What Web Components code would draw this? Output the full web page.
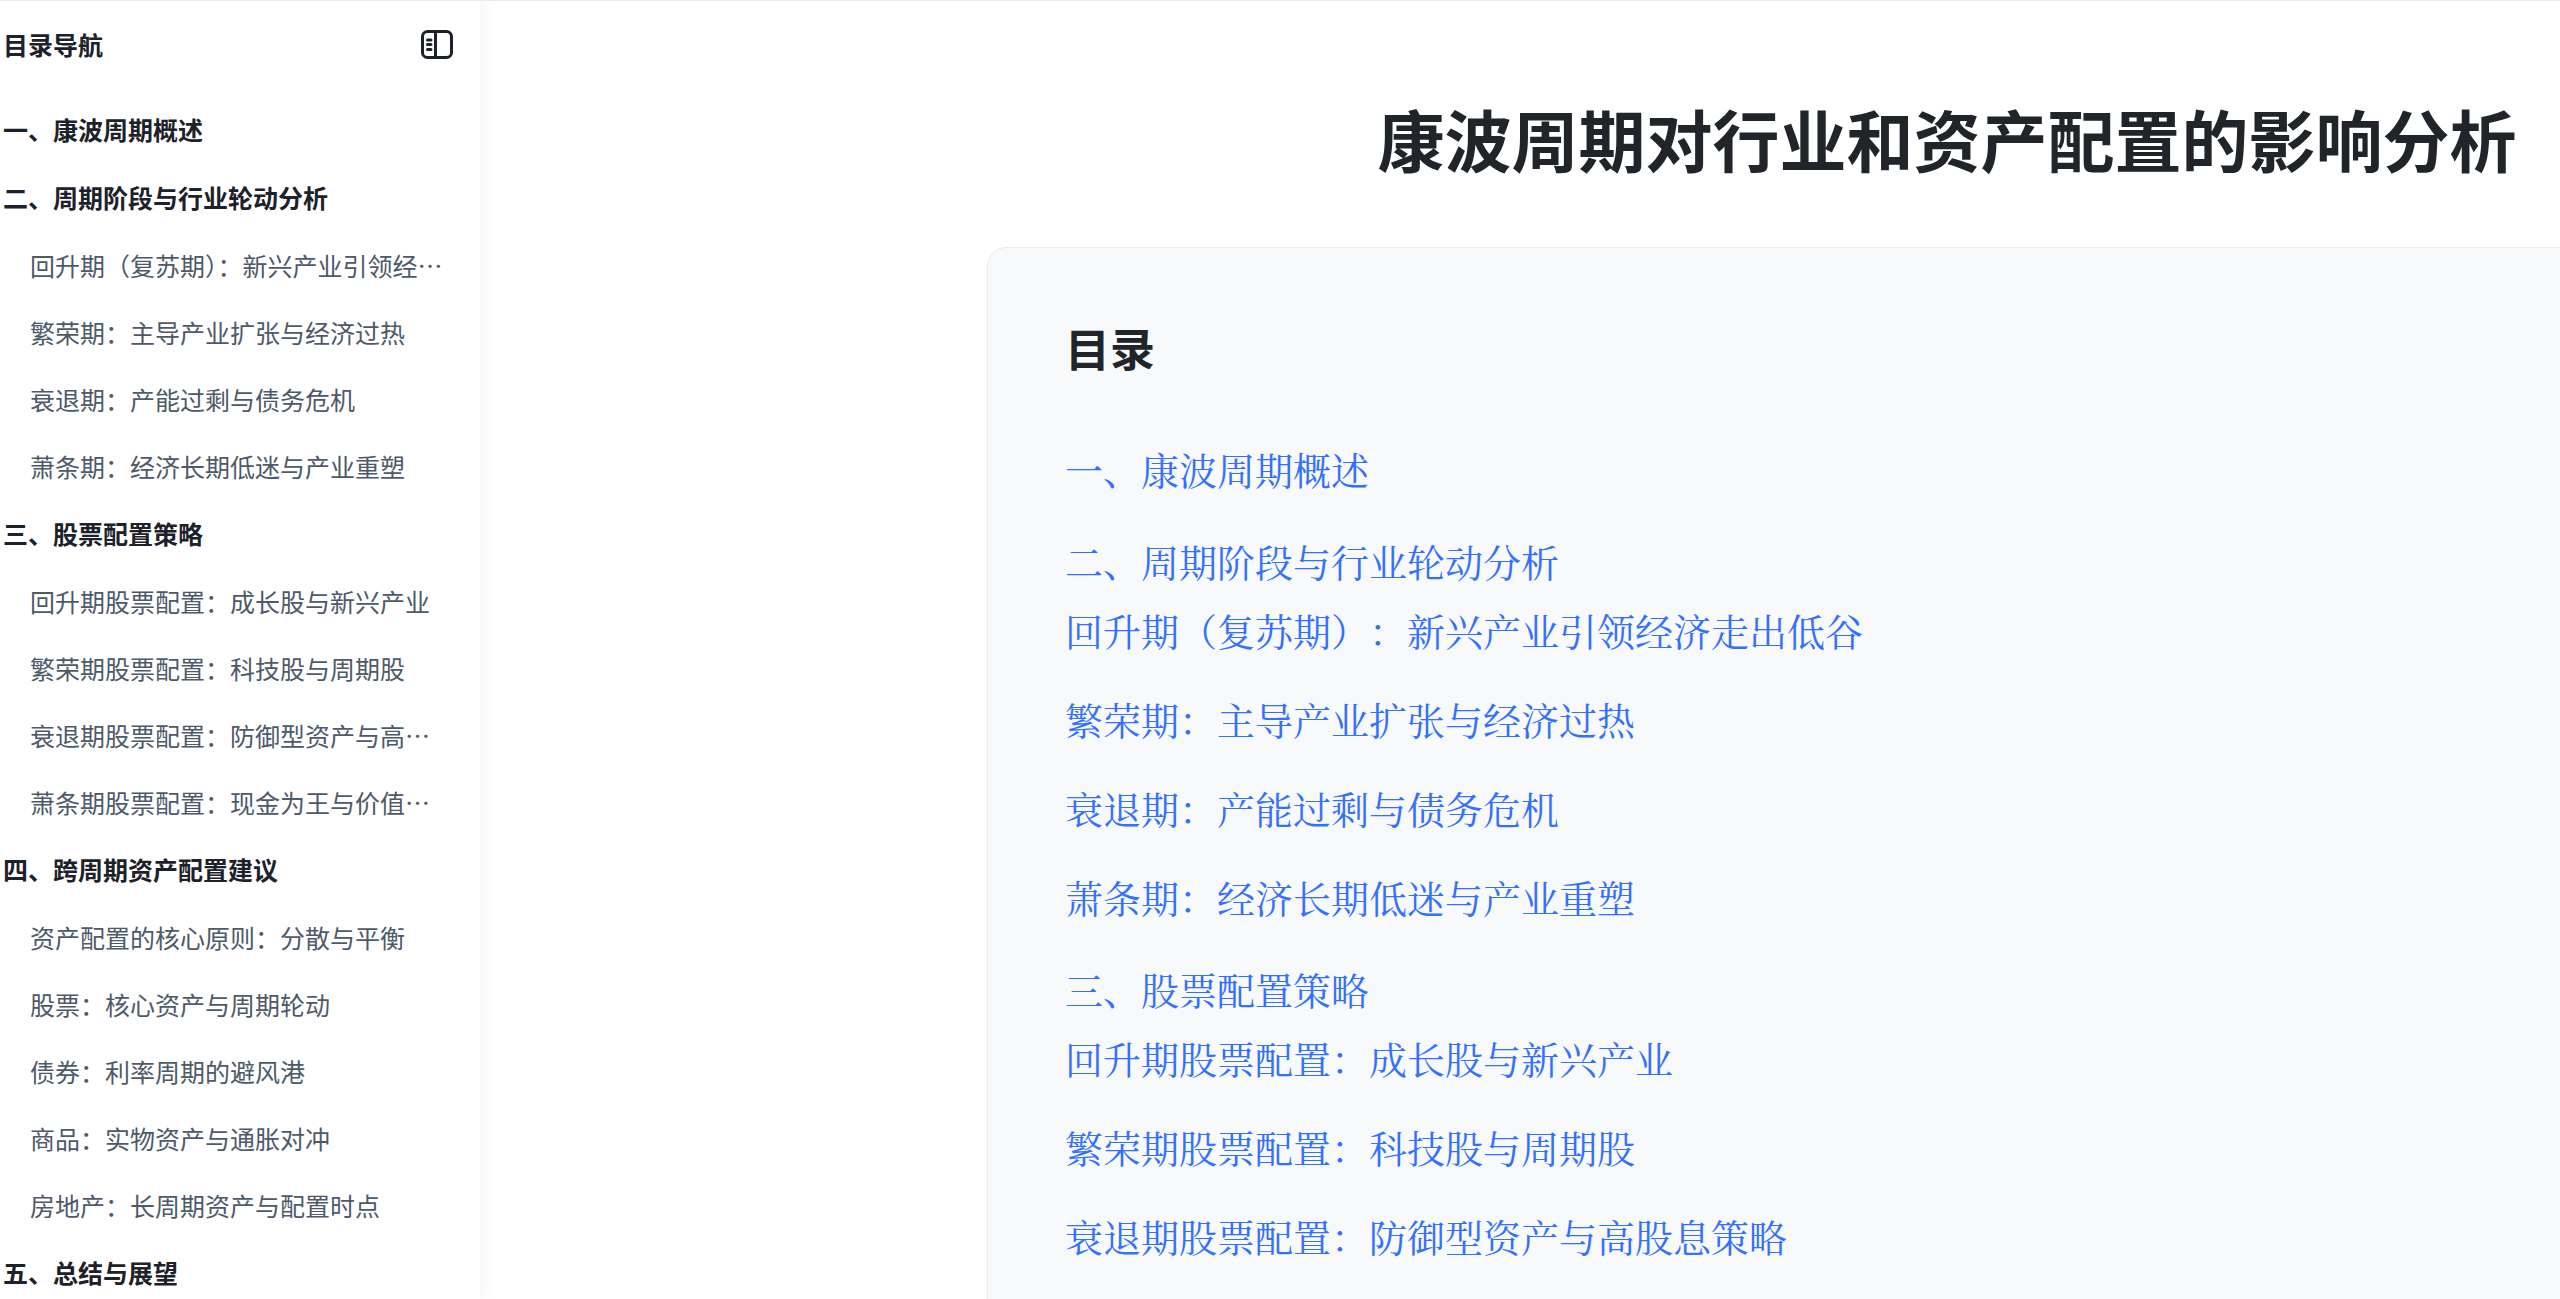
<!DOCTYPE html>
<html lang="zh-CN">
<head>
  <meta charset="UTF-8">
  <meta name="viewport" content="width=device-width, initial-scale=1.0">
  <title>康波周期对行业和资产配置的影响分析</title>
  <style>
    body {
      margin: 0;
      background: #fff;
      color: #1d2129;
      font-family: "Noto Sans CJK SC", sans-serif;
      overflow: hidden;
    }
  </style>
</head>
<body>
  <report-page>
    <side-nav slot="nav" heading="目录导航"></side-nav>
    <report-article heading="康波周期对行业和资产配置的影响分析">
      <toc-card heading="目录"></toc-card>
    </report-article>
  </report-page>

  <script>
    const sections = [
      { title: '一、康波周期概述', items: [] },
      {
        title: '二、周期阶段与行业轮动分析',
        items: [
          '回升期（复苏期）：新兴产业引领经济走出低谷',
          '繁荣期：主导产业扩张与经济过热',
          '衰退期：产能过剩与债务危机',
          '萧条期：经济长期低迷与产业重塑'
        ]
      },
      {
        title: '三、股票配置策略',
        items: [
          '回升期股票配置：成长股与新兴产业',
          '繁荣期股票配置：科技股与周期股',
          '衰退期股票配置：防御型资产与高股息策略',
          '萧条期股票配置：现金为王与价值投资'
        ]
      },
      {
        title: '四、跨周期资产配置建议',
        items: [
          '资产配置的核心原则：分散与平衡',
          '股票：核心资产与周期轮动',
          '债券：利率周期的避风港',
          '商品：实物资产与通胀对冲',
          '房地产：长周期资产与配置时点'
        ]
      },
      { title: '五、总结与展望', items: [] }
    ]

    // nested list shared by the side navigation and the card
    const listMarkup = (data) => data.map((section, i) => `
      <li class="section">
        <a class="title" href="#s${i + 1}">${section.title}</a>
        ${section.items.length ? `<ul>${section.items.map((item, j) => `
          <li><a href="#s${i + 1}-${j + 1}">${item}</a></li>`).join('')}
        </ul>` : ''}
      </li>`).join('')

    class ReportPage extends HTMLElement {
      constructor() {
        super()
        this.shadow = this.attachShadow({ mode: 'open' })
      }

      connectedCallback() {
        this.shadow.innerHTML =
        /*html*/`
        <style>
          :host {
            display: flex;
            height: 100vh;
            box-sizing: border-box;
            border-top: 1px solid #e8e9eb;
            overflow: hidden;
          }

          main {
            flex: 1;
            min-width: 0;
            padding: 0 0 0 507px;
          }
        </style>

        <slot name="nav"></slot>
        <main><slot></slot></main>
        `
      }
    }

    class SideNav extends HTMLElement {
      constructor() {
        super()
        this.shadow = this.attachShadow({ mode: 'open' })
      }

      connectedCallback() {
        this.shadow.innerHTML =
        /*html*/`
        <style>
          :host {
            display: block;
            flex: none;
            width: 480px;
            box-sizing: border-box;
            padding: 9px 27px 0 3px;
            background: #fff;
            box-shadow: 2px 0 16px rgba(31, 35, 41, 0.06);
            font-size: 25px;
          }

          header {
            display: flex;
            align-items: center;
            justify-content: space-between;
            height: 68px;
            margin-bottom: 18px;
          }

          h2 {
            margin: 0;
            font-size: 25px;
            font-weight: 700;
          }

          button {
            display: flex;
            padding: 0;
            border: none;
            background: transparent;
            color: inherit;
          }

          ul {
            list-style: none;
            margin: 0;
            padding: 0;
          }

          li li {
            padding-left: 27px;
          }

          a {
            display: block;
            height: 67px;
            line-height: 67px;
            color: #4e5969;
            text-decoration: none;
            white-space: nowrap;
            overflow: hidden;
            text-overflow: ellipsis;
          }

          .title {
            height: 68px;
            color: #1d2129;
            font-weight: 700;
          }
        </style>

        <header>
          <h2>${this.getAttribute('heading')}</h2>
          <button type="button" aria-label="收起目录">
            <svg width="32" height="29" viewBox="0 0 32 29" fill="none" stroke="currentColor" stroke-width="3">
              <rect x="1.5" y="1.5" width="29" height="26" rx="5"/>
              <path d="M14.5 1.5v26"/>
              <path d="M6.5 10h3.5M6.5 14.5h3.5M6.5 19.5h3.5" stroke-linecap="round"/>
            </svg>
          </button>
        </header>
        <nav><ul>${listMarkup(sections)}</ul></nav>
        `
      }
    }

    class ReportArticle extends HTMLElement {
      constructor() {
        super()
        this.shadow = this.attachShadow({ mode: 'open' })
      }

      connectedCallback() {
        this.shadow.innerHTML =
        /*html*/`
        <style>
          :host {
            display: block;
            width: 75vw;
            padding-top: 81px;
          }

          h1 {
            margin: 0 0 53px;
            color: #212529;
            font-size: 67px;
            font-weight: 700;
            line-height: 112px;
            text-align: center;
          }
        </style>

        <article>
          <h1>${this.getAttribute('heading')}</h1>
          <slot></slot>
        </article>
        `
      }
    }

    class TocCard extends HTMLElement {
      constructor() {
        super()
        this.shadow = this.attachShadow({ mode: 'open' })
      }

      connectedCallback() {
        this.shadow.innerHTML =
        /*html*/`
        <style>
          :host {
            display: block;
            box-sizing: border-box;
            padding: 64px 77px;
            border: 1px solid #e9ecef;
            border-radius: 19px;
            background: #f8f9fb;
          }

          h2 {
            margin: 0 0 50px;
            color: #212529;
            font-size: 45px;
            font-weight: 700;
            line-height: 72px;
          }

          ul {
            display: flex;
            flex-direction: column;
            gap: 20px;
            list-style: none;
            margin: 0;
            padding: 0;
          }

          .sections {
            gap: 23px;
          }

          a {
            display: block;
            color: #3370ff;
            font-family: "Noto Serif CJK SC", "Noto Serif SC", "Noto Sans CJK SC", serif;
            font-size: 38px;
            font-weight: 400;
            line-height: 69px;
            text-decoration: none;
            text-spacing-trim: space-all;
            white-space: nowrap;
          }
        </style>

        <h2>${this.getAttribute('heading')}</h2>
        <ul class="sections">${listMarkup(sections)}</ul>
        `
      }
    }

    customElements.define('report-page', ReportPage)
    customElements.define('side-nav', SideNav)
    customElements.define('report-article', ReportArticle)
    customElements.define('toc-card', TocCard)
  </script>
</body>
</html>
